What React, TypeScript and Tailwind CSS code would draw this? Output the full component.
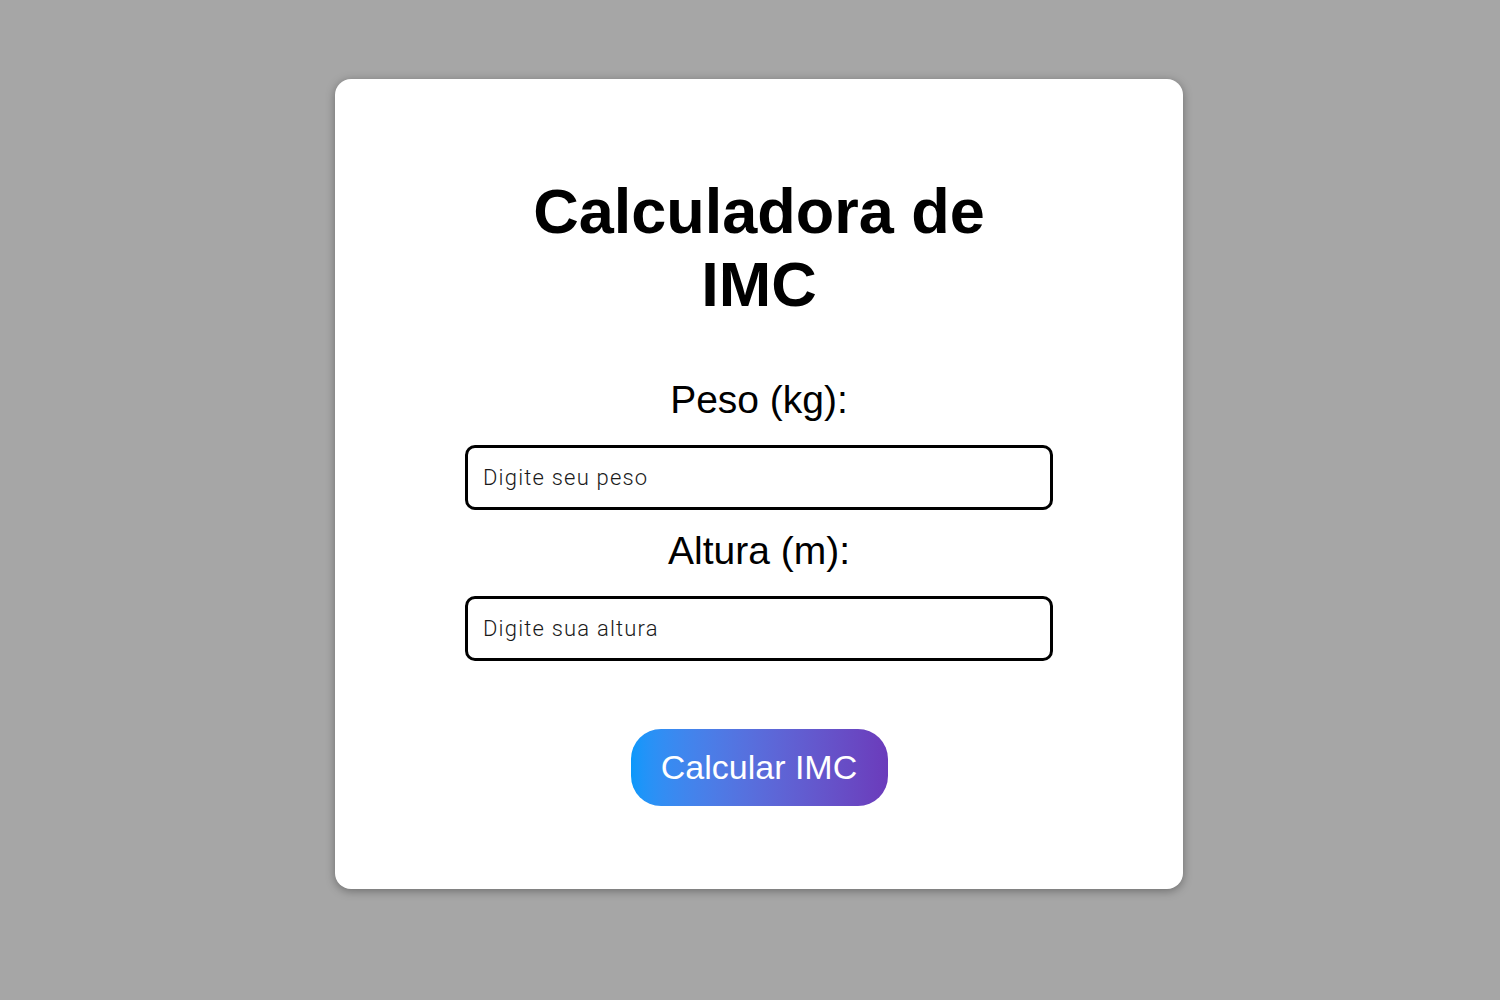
import { useState } from "react";

const App = () => {
  const [peso, setPeso] = useState("");
  const [altura, setAltura] = useState("");

  return (
    <div
      className="min-h-screen w-full bg-[#a6a6a6] flex justify-center pt-[79px] pl-[18px]"
      style={{ fontFamily: '"Liberation Sans", Arial, sans-serif' }}
    >
      <div className="w-[848px] h-[810px] bg-white rounded-[16px] shadow-[0_2px_10px_rgba(0,0,0,0.35)] flex flex-col items-center pt-[96px]">
        <h1 className="max-w-[480px] text-center text-[63px] leading-[73px] font-bold text-black">
          Calculadora de IMC
        </h1>

        <label className="mt-[57px] text-[39px] leading-[44px] text-black">Peso (kg):</label>
        <input
          value={peso}
          onChange={(e) => setPeso(e.target.value)}
          placeholder="Digite seu peso"
          className="mt-[23px] w-[588px] h-[65px] border-[3px] border-black rounded-[10px] px-[15px] text-[22px] tracking-[1.2px] font-light text-black placeholder:text-[#1a1a1a] outline-none"
          style={{ fontFamily: "Roboto, sans-serif" }}
        />

        <label className="mt-[19px] text-[39px] leading-[44px] text-black">Altura (m):</label>
        <input
          value={altura}
          onChange={(e) => setAltura(e.target.value)}
          placeholder="Digite sua altura"
          className="mt-[23px] w-[588px] h-[65px] border-[3px] border-black rounded-[10px] px-[15px] text-[22px] tracking-[1.2px] font-light text-black placeholder:text-[#1a1a1a] outline-none"
          style={{ fontFamily: "Roboto, sans-serif" }}
        />

        <button className="mt-[68px] w-[257px] h-[77px] rounded-[30px] bg-gradient-to-r from-[#0898fb] to-[#6b3bbb] text-white text-[34px]">
          Calcular IMC
        </button>
      </div>
    </div>
  );
};

export default App;
